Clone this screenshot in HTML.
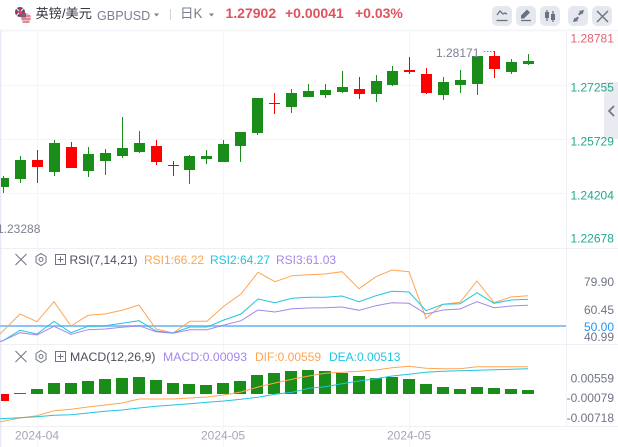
<!DOCTYPE html>
<html><head><meta charset="utf-8"><style>
html,body{margin:0;padding:0;background:#fff;width:618px;height:447px;overflow:hidden}
svg{display:block;font-family:"Liberation Sans","Noto Sans CJK SC",sans-serif}
</style></head><body>
<svg width="618" height="447" viewBox="0 0 618 447" xmlns="http://www.w3.org/2000/svg">
<rect width="618" height="447" fill="#fff"/>
<!-- grid -->
<g fill="none" stroke="#f4f5f9" stroke-width="1">
<path d="M37.5 31V447M223.5 31V447M409.5 31V447"/>
<path d="M0 85.5H566M0 139.5H566M0 193.5H566"/>
</g>
<path d="M0 30.5H618" stroke="#f4f5f9" stroke-width="2"/>
<path d="M0 248.5H618M0 344.5H618M0 426.5H618M566.5 31V427" stroke="#eef0f5" stroke-width="1"/>
<path d="M0.5 31V447" stroke="#e6e9f3" stroke-width="1.5"/>
<rect x="604" y="82" width="14" height="57" fill="#eaebf0"/>
<path d="M614 106l-5 5 5 5" fill="none" stroke="#6b7280" stroke-width="1.6"/>
<!-- header -->
<circle cx="20" cy="12" r="5" fill="#3c3b6e"/>
<path d="M16 8l8 8M24 8l-8 8" stroke="#e8e8ee" stroke-width="1.4"/>
<path d="M20 7V17M15 12H25" stroke="#d9394c" stroke-width="1.6"/>
<circle cx="26" cy="18" r="5" fill="#f0c4c8"/>
<path d="M21.5 16H30.5M21.5 19H30.5M22.5 22H29.5" stroke="#dc5a66" stroke-width="1.2"/>
<rect x="21" y="13" width="5" height="4.5" fill="#5c6a96"/>
<text x="35.500" y="18" font-size="13.200" fill="#33363f">英镑/美元</text>
<text x="97" y="20" font-size="12.600" fill="#7a7f8f">GBPUSD</text>
<path d="M154 13.500h5l-2.500 3z" fill="#7a7f8f"/>
<path d="M170.500 9V20" stroke="#d0d4de"/>
<text x="180" y="18" font-size="13.500" fill="#7a7f8f">日K</text>
<path d="M209 13.500h5l-2.500 3z" fill="#7a7f8f"/>
<g font-size="14" font-weight="bold" fill="#e0525f">
<text x="225.500" y="18">1.27902</text>
<text x="285" y="18">+0.00041</text>
<text x="355" y="18">+0.03%</text>
</g>
<!-- buttons -->
<g fill="#e6e8ef">
<rect x="492" y="6" width="20" height="20" rx="5"/>
<rect x="516" y="6" width="20" height="20" rx="5"/>
<rect x="540" y="6" width="20" height="20" rx="5"/>
<rect x="568" y="6" width="20" height="20" rx="5"/>
<rect x="592" y="6" width="20" height="20" rx="5"/>
</g>
<g fill="none" stroke="#6b7280" stroke-width="1.3">
<path d="M497 15l3-4 3 3 2-1 2 1"/>
<path d="M496.500 20.500H507.500"/>
<path d="M521 20.500H531" />
<path d="M547 10V21M553 11V22" />
<path d="M597 11l11 11M608 11l-11 11" stroke-width="1.4"/>
</g>
<path d="M521 18.500l0-3 6-6 3 3-6 6z" fill="#6b7280"/>
<rect x="545" y="12" width="4" height="6" fill="#6b7280"/>
<rect x="551" y="14" width="4" height="6" fill="#6b7280"/>
<path d="M584 10l-5 1 1 1-2 2 1.500 1.500 2-2 1 1zM573 22l5-1-1-1 2-2-1.500-1.500-2 2-1-1z" fill="#6b7280"/>
<!-- candles green -->
<path stroke="#1a8c1a" stroke-width="1" fill="none" d="M3.500 176V193M20.500 156V183M54.500 140V176M88.500 147V177M105.500 149V175M122.500 117V158M139.500 131V153M189.500 155V184M206.500 150V164M223.500 140V162M240.500 132V162M257.500 98V135M291.500 89V113M308.500 84V97M325.500 84V98M342.500 71V93M376.500 75V102M392.500 66V86M443.500 77V100M460.500 70V93M477.500 56V95M511.500 59V74M528.500 54V65"/>
<path fill="#1a8c1a" d="M1 178h8v9h-8zM15 160h11v19h-11zM49 143h11v29h-11zM83 154h11v17h-11zM100 153h11v8h-11zM117 148h11v8h-11zM134 143h11v9h-11zM184 156h11v14h-11zM201 156h11v3h-11zM218 144h11v18h-11zM235 132h11v14h-11zM252 98h11v35h-11zM286 93h11v14h-11zM303 91h11v6h-11zM320 90h11v5h-11zM337 87h11v5h-11zM371 81h11v13h-11zM387 71h11v14h-11zM438 82h11v13h-11zM455 80h11v5h-11zM472 56h11v28h-11zM506 62h11v10h-11zM523 61h11v3h-11z"/>
<!-- candles red -->
<path stroke="#ff0000" stroke-width="1" fill="none" d="M37.500 150V183M71.500 142V168M156.500 140V165M173.500 161V176M274.500 93V114M359.500 77V99M409.500 57V74M426.500 68V94M494.500 51V78"/>
<path fill="#ff0000" d="M32 160h11v7h-11zM66 147h11v21h-11zM151 146h11v16h-11zM168 165h11v1h-11zM269 103h11v1h-11zM354 89h11v5h-11zM404 70h11v2h-11zM421 74h11v19h-11zM489 56h11v13h-11z"/>
<text x="436" y="57" font-size="12" fill="#7e8291">1.28171</text>
<path d="M484 51.500h10" stroke="#8a8e9c" stroke-dasharray="1.500 1.500"/>
<text x="-3" y="233" font-size="12" fill="#7e8291">1.23288</text>
<!-- right axis -->
<g font-size="12">
<g fill="#e2636f"><text x="570.500" y="42.500">1.28781</text></g>
<g fill="#1fa98c">
<text x="570.500" y="91.500">1.27255</text>
<text x="570.500" y="145.500">1.25729</text>
<text x="570.500" y="199.500">1.24204</text>
<text x="570.500" y="242.500">1.22678</text>
</g>
<g fill="#6f7484" text-anchor="end">
<text x="614" y="286">79.90</text>
<text x="614" y="314">60.45</text>
<text x="614" y="341">40.99</text>
<text x="614" y="382.500">0.00559</text>
<text x="614" y="402">-0.00079</text>
<text x="614" y="422">-0.00718</text>
</g>
<text x="614" y="331" text-anchor="end" fill="#2196f3">50.00</text>
<g fill="#a3a6b6">
<text x="15" y="439.500">2024-04</text>
<text x="201" y="439.500">2024-05</text>
<text x="387" y="439.500">2024-05</text>
</g>
</g>
<!-- RSI -->
<path d="M0 326H566" stroke="#8cc4f5" stroke-width="2"/>
<g fill="none" stroke-width="1">
<polyline stroke="#ffa552" points="0,334 3,331 20,314 37,321.700 54,301.700 71,326 88,315.300 105,314 122,310.300 139,305 156,329 173,333 190,321.300 207,321.300 224,306 241,294 258,272.300 275,281.700 292,275.700 309,274.700 325,274 342,271.700 359,288.700 376,276.700 392,270 409,271.700 426,318.300 443,304.300 460,302.300 477,281 494,302.700 511,297 528,295.700"/>
<polyline stroke="#22c5e0" points="0,341.500 3,340.700 20,330.300 37,334 54,321.300 71,332.700 88,326.300 105,325.700 122,323.300 139,320.700 156,331 173,333 190,327 207,327 224,320 241,314 258,299 275,302.700 292,298.300 309,297.300 325,297.300 342,296 359,301.700 376,295.700 392,291.300 409,292 426,310.700 443,304.300 460,303.700 477,292.700 494,303.300 511,300 528,299.300"/>
<polyline stroke="#a587ea" points="0,341.500 3,340.700 20,332.700 37,335 54,326.300 71,334.300 88,329.700 105,329 122,327.300 139,325.700 156,331.700 173,333.300 190,329.700 207,329.700 224,325 241,320.700 258,310 275,312 292,308.700 309,308 325,307.700 342,307 359,310.300 376,305.700 392,302.700 409,303.300 426,314 443,310 460,309 477,301.700 494,307.700 511,306 528,305.300"/>
</g>
<!-- legend icons -->
<g fill="none" stroke="#6f7484" stroke-width="1">
<path d="M15.500 254l11 11M26.500 254l-11 11"/>
<path d="M41 253.500l5 3v6l-5 3-5-3v-6z"/>
<circle cx="41" cy="259.500" r="2"/>
<rect x="55.500" y="254.500" width="10" height="10"/>
<path d="M60.500 256.500v6M57.500 259.500h6"/>
<path d="M15.500 351l11 11M26.500 351l-11 11"/>
<path d="M41 350.500l5 3v6l-5 3-5-3v-6z"/>
<circle cx="41" cy="356.500" r="2"/>
<rect x="55.500" y="351.500" width="10" height="10"/>
<path d="M60.500 353.500v6M57.500 356.500h6"/>
</g>
<g font-size="12">
<text x="69.500" y="264" fill="#4b4f5c">RSI(7,14,21)</text>
<text x="144" y="264" fill="#ffa552">RSI1:66.22</text>
<text x="210" y="264" fill="#22c5e0">RSI2:64.27</text>
<text x="276" y="264" fill="#a587ea">RSI3:61.03</text>
<text x="70" y="361" fill="#4b4f5c" font-size="12.300">MACD(12,26,9)</text>
<text x="163" y="361" fill="#a587ea" font-size="12.300">MACD:0.00093</text>
<text x="255" y="361" fill="#ffa552">DIF:0.00559</text>
<text x="329" y="361" fill="#22c5e0">DEA:0.00513</text>
</g>
<!-- MACD bars -->
<rect x="1" y="394" width="8" height="7" fill="#ff0000"/>
<path fill="#1a8c1a" d="M14 393h12v1h-12zM31 389h12v5h-12zM48 383h12v11h-12zM65 383h12v11h-12zM82 381h12v13h-12zM99 379h12v15h-12zM116 378h12v16h-12zM133 377h12v17h-12zM150 380h12v14h-12zM167 383h12v11h-12zM183 384h12v10h-12zM200 385h12v9h-12zM217 383h12v11h-12zM234 381h12v13h-12zM251 375h12v19h-12zM268 373h12v21h-12zM285 371h12v23h-12zM302 370h12v24h-12zM319 371h12v23h-12zM336 373h12v21h-12zM353 376h12v18h-12zM370 378h12v16h-12zM386 377h12v17h-12zM403 379h12v15h-12zM420 384h12v10h-12zM437 387h12v7h-12zM454 389h12v5h-12zM471 387h12v7h-12zM488 388h12v6h-12zM505 389h12v5h-12zM522 390h12v4h-12z"/>
<g fill="none" stroke-width="1">
<polyline stroke="#ffa552" points="0,421.700 20,418 37,415.700 54,410.700 71,409.300 88,407 105,405 122,403 139,399 156,399 173,399 190,398 207,397 224,395 241,392 258,387 275,383 292,379.300 309,376 325,373.300 342,372.300 359,371.300 376,370 392,367.700 409,366.300 426,368.300 443,368.700 460,368.700 477,366.700 494,366.700 511,366.700 528,366.700"/>
<polyline stroke="#22c5e0" points="0,418.700 20,417.700 37,416.700 54,415.300 71,414.700 88,413 105,411.300 122,410 139,408 156,406.300 173,405 190,403.700 207,402.300 224,401 241,399.300 258,397.300 275,394.300 292,392.300 309,388.300 325,386.700 342,383.700 359,381 376,378.700 392,376 409,374.300 426,372.300 443,371.300 460,370.700 477,370.300 494,369.700 511,369.300 528,368.700"/>
</g>
</svg>
</body></html>
